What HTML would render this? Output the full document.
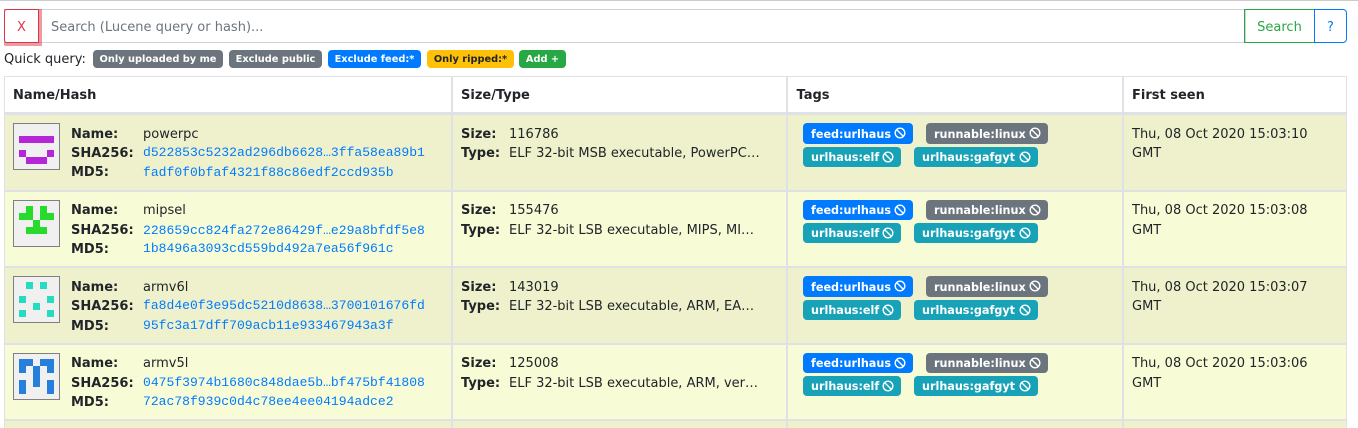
<!DOCTYPE html>
<html><head><meta charset="utf-8">
<style>
html,body{margin:0;padding:0;background:#fff;width:1358px;height:428px;overflow:hidden}
body{position:relative;font-family:"DejaVu Sans","Liberation Sans",sans-serif;font-size:13px;color:#212529}
.a{position:absolute;white-space:nowrap}
.bd{position:absolute;background:#dee2e6}
.row{position:absolute;left:5px;width:1341px;height:75px}
.t{position:absolute;white-space:nowrap;line-height:20px;margin-top:1px}
b{font-weight:700}
.m{font-family:"Liberation Mono",monospace;color:#007bff;font-size:13.05px}
.ic{position:absolute;left:13px;width:45px;height:45px;background:#f0f0f0;border:1px solid #808080}
.ic i{position:absolute;display:block}
.b{position:absolute;height:20px;line-height:20px;border-radius:4px;color:#fff;font-weight:700;font-size:11.2px;padding-left:8px;padding-top:1px;white-space:nowrap;box-sizing:border-box}
.b svg{position:absolute;top:4px;width:12px;height:12px}
.q{position:absolute;top:50px;height:18px;line-height:20px;border-radius:4px;color:#fff;font-weight:700;font-size:9.8px;text-align:center;white-space:nowrap}
</style></head><body>
<div class="a" style="left:0;top:0;width:1358px;height:1px;background:#ccc"></div>
<div class="a" style="left:4px;top:9px;width:1241px;height:32px;border:1px solid #ced4da;border-left:0"></div>
<div class="a" style="left:4px;top:9px;width:35px;height:34px;box-sizing:border-box;border:1px solid #dc3545;border-radius:3px 0 0 3px;background:#fff;box-shadow:0 0 0 3px rgba(220,53,69,.5);clip-path:inset(0 -3px -3px 0);color:#dc3545;text-align:center;line-height:35px;font-size:13px">X</div>
<div class="a" style="left:51px;top:9px;line-height:37px;color:#6c757d;font-size:13px">Search (Lucene query or hash)...</div>
<div class="a" style="left:1244px;top:9px;width:71px;height:34px;box-sizing:border-box;border:1px solid #28a745;color:#28a745;text-align:center;line-height:35px;font-size:13px">Search</div>
<div class="a" style="left:1314px;top:9px;width:33px;height:34px;box-sizing:border-box;border:1px solid #007bff;border-radius:0 4px 4px 0;color:#007bff;text-align:center;line-height:35px;font-size:13px">?</div>

<div class="a" style="left:4px;top:49px;line-height:21px;font-size:13px">Quick query:</div>
<div class="q" style="left:93px;width:130px;background:#6c757d">Only uploaded by me</div>
<div class="q" style="left:229px;width:93px;background:#6c757d">Exclude public</div>
<div class="q" style="left:328px;width:93px;background:#007bff">Exclude feed:*</div>
<div class="q" style="left:427px;width:87px;background:#ffc107;color:#212529">Only ripped:*</div>
<div class="q" style="left:519px;width:47px;background:#28a745">Add +</div>

<!-- rows -->
<div class="row" style="top:115px;background:#eef1cb"></div>
<div class="row" style="top:191.5px;background:#f8fcd6"></div>
<div class="row" style="top:268px;background:#eef1cb"></div>
<div class="row" style="top:344.5px;background:#f8fcd6"></div>
<div class="row" style="top:421px;background:#eef1cb;height:7px"></div>

<!-- grid -->
<div class="bd" style="left:4px;top:76px;width:1343px;height:1px"></div>
<div class="bd" style="left:4px;top:112px;width:1343px;height:3px"></div>
<div class="bd" style="left:4px;top:190px;width:1343px;height:2px"></div>
<div class="bd" style="left:4px;top:266px;width:1343px;height:2px"></div>
<div class="bd" style="left:4px;top:343px;width:1343px;height:2px"></div>
<div class="bd" style="left:4px;top:419px;width:1343px;height:2px"></div>
<div class="bd" style="left:4px;top:76px;width:1px;height:352px"></div>
<div class="bd" style="left:451px;top:76px;width:2px;height:352px"></div>
<div class="bd" style="left:786px;top:76px;width:2px;height:352px"></div>
<div class="bd" style="left:1122px;top:76px;width:2px;height:352px"></div>
<div class="bd" style="left:1346px;top:76px;width:1px;height:352px"></div>

<!-- header -->
<div class="t" style="left:13px;top:85px"><b>Name/Hash</b></div>
<div class="t" style="left:461px;top:85px"><b>Size/Type</b></div>
<div class="t" style="left:796.5px;top:85px"><b>Tags</b></div>
<div class="t" style="left:1132px;top:85px"><b>First seen</b></div>

<!-- row 1 -->
<div class="ic" style="top:123px"><i style="left:5px;top:12px;width:35px;height:7px;background:#b526d9"></i><i style="left:5px;top:26px;width:7px;height:7px;background:#b526d9"></i><i style="left:33px;top:26px;width:7px;height:7px;background:#b526d9"></i><i style="left:12px;top:33px;width:21px;height:7px;background:#b526d9"></i></div>
<div class="t" style="left:71px;top:124px"><b>Name:</b></div><div class="t" style="left:143px;top:124px">powerpc</div>
<div class="t" style="left:71px;top:143px"><b>SHA256:</b></div><div class="t m" style="left:143px;top:142px">d522853c5232ad296db6628…3ffa58ea89b1</div>
<div class="t" style="left:71px;top:162px"><b>MD5:</b></div><div class="t m" style="left:143px;top:162px">fadf0f0bfaf4321f88c86edf2ccd935b</div>
<div class="t" style="left:461px;top:124px"><b>Size:</b></div><div class="t" style="left:509px;top:124px">116786</div>
<div class="t" style="left:461px;top:143px"><b>Type:</b></div><div class="t" style="left:509px;top:143px">ELF 32-bit MSB executable, PowerPC…</div>
<div class="b" style="left:803px;top:123px;width:110px;height:21px;line-height:21px;background:#007bff">feed:urlhaus<svg style="left:91px" viewBox="0 0 12 12" fill="none" stroke="#fff" stroke-width="1.4"><circle cx="6" cy="6" r="4.8"/><path d="M2.6 2.6l6.8 6.8"/></svg></div>
<div class="b" style="left:926px;top:123px;width:122px;height:21px;line-height:21px;background:#6c757d">runnable:linux<svg style="left:103px" viewBox="0 0 12 12" fill="none" stroke="#fff" stroke-width="1.4"><circle cx="6" cy="6" r="4.8"/><path d="M2.6 2.6l6.8 6.8"/></svg></div>
<div class="b" style="left:803px;top:147px;width:98px;background:#17a2b8">urlhaus:elf<svg style="left:79px" viewBox="0 0 12 12" fill="none" stroke="#fff" stroke-width="1.4"><circle cx="6" cy="6" r="4.8"/><path d="M2.6 2.6l6.8 6.8"/></svg></div>
<div class="b" style="left:914px;top:147px;width:124px;background:#17a2b8">urlhaus:gafgyt<svg style="left:105px" viewBox="0 0 12 12" fill="none" stroke="#fff" stroke-width="1.4"><circle cx="6" cy="6" r="4.8"/><path d="M2.6 2.6l6.8 6.8"/></svg></div>
<div class="t" style="left:1132px;top:124px">Thu, 08 Oct 2020 15:03:10</div><div class="t" style="left:1132px;top:143px">GMT</div>

<!-- row 2 -->
<div class="ic" style="top:200px"><i style="left:12px;top:5px;width:7px;height:7px;background:#26db2b"></i><i style="left:26px;top:5px;width:7px;height:7px;background:#26db2b"></i><i style="left:5px;top:12px;width:14px;height:7px;background:#26db2b"></i><i style="left:26px;top:12px;width:14px;height:7px;background:#26db2b"></i><i style="left:19px;top:19px;width:7px;height:7px;background:#26db2b"></i><i style="left:12px;top:26px;width:21px;height:7px;background:#26db2b"></i></div>
<div class="t" style="left:71px;top:200px"><b>Name:</b></div><div class="t" style="left:143px;top:200px">mipsel</div>
<div class="t" style="left:71px;top:220px"><b>SHA256:</b></div><div class="t m" style="left:143px;top:220px">228659cc824fa272e86429f…e29a8bfdf5e8</div>
<div class="t" style="left:71px;top:239px"><b>MD5:</b></div><div class="t m" style="left:143px;top:238px">1b8496a3093cd559bd492a7ea56f961c</div>
<div class="t" style="left:461px;top:200px"><b>Size:</b></div><div class="t" style="left:509px;top:200px">155476</div>
<div class="t" style="left:461px;top:220px"><b>Type:</b></div><div class="t" style="left:509px;top:220px">ELF 32-bit LSB executable, MIPS, MI…</div>
<div class="b" style="left:803px;top:200px;width:110px;background:#007bff">feed:urlhaus<svg style="left:91px" viewBox="0 0 12 12" fill="none" stroke="#fff" stroke-width="1.4"><circle cx="6" cy="6" r="4.8"/><path d="M2.6 2.6l6.8 6.8"/></svg></div>
<div class="b" style="left:926px;top:200px;width:122px;background:#6c757d">runnable:linux<svg style="left:103px" viewBox="0 0 12 12" fill="none" stroke="#fff" stroke-width="1.4"><circle cx="6" cy="6" r="4.8"/><path d="M2.6 2.6l6.8 6.8"/></svg></div>
<div class="b" style="left:803px;top:223px;width:98px;background:#17a2b8">urlhaus:elf<svg style="left:79px" viewBox="0 0 12 12" fill="none" stroke="#fff" stroke-width="1.4"><circle cx="6" cy="6" r="4.8"/><path d="M2.6 2.6l6.8 6.8"/></svg></div>
<div class="b" style="left:914px;top:223px;width:124px;background:#17a2b8">urlhaus:gafgyt<svg style="left:105px" viewBox="0 0 12 12" fill="none" stroke="#fff" stroke-width="1.4"><circle cx="6" cy="6" r="4.8"/><path d="M2.6 2.6l6.8 6.8"/></svg></div>
<div class="t" style="left:1132px;top:200px">Thu, 08 Oct 2020 15:03:08</div><div class="t" style="left:1132px;top:220px">GMT</div>

<!-- row 3 -->
<div class="ic" style="top:276px"><i style="left:12px;top:5px;width:7px;height:7px;background:#26dbc0"></i><i style="left:26px;top:5px;width:7px;height:7px;background:#26dbc0"></i><i style="left:5px;top:19px;width:7px;height:7px;background:#26dbc0"></i><i style="left:33px;top:19px;width:7px;height:7px;background:#26dbc0"></i><i style="left:19px;top:26px;width:7px;height:7px;background:#26dbc0"></i><i style="left:5px;top:33px;width:7px;height:7px;background:#26dbc0"></i><i style="left:33px;top:33px;width:7px;height:7px;background:#26dbc0"></i></div>
<div class="t" style="left:71px;top:277px"><b>Name:</b></div><div class="t" style="left:143px;top:277px">armv6l</div>
<div class="t" style="left:71px;top:296px"><b>SHA256:</b></div><div class="t m" style="left:143px;top:295px">fa8d4e0f3e95dc5210d8638…3700101676fd</div>
<div class="t" style="left:71px;top:316px"><b>MD5:</b></div><div class="t m" style="left:143px;top:315px">95fc3a17dff709acb11e933467943a3f</div>
<div class="t" style="left:461px;top:277px"><b>Size:</b></div><div class="t" style="left:509px;top:277px">143019</div>
<div class="t" style="left:461px;top:296px"><b>Type:</b></div><div class="t" style="left:509px;top:296px">ELF 32-bit LSB executable, ARM, EA…</div>
<div class="b" style="left:803px;top:276px;width:110px;height:21px;line-height:21px;background:#007bff">feed:urlhaus<svg style="left:91px" viewBox="0 0 12 12" fill="none" stroke="#fff" stroke-width="1.4"><circle cx="6" cy="6" r="4.8"/><path d="M2.6 2.6l6.8 6.8"/></svg></div>
<div class="b" style="left:926px;top:276px;width:122px;height:21px;line-height:21px;background:#6c757d">runnable:linux<svg style="left:103px" viewBox="0 0 12 12" fill="none" stroke="#fff" stroke-width="1.4"><circle cx="6" cy="6" r="4.8"/><path d="M2.6 2.6l6.8 6.8"/></svg></div>
<div class="b" style="left:803px;top:300px;width:98px;background:#17a2b8">urlhaus:elf<svg style="left:79px" viewBox="0 0 12 12" fill="none" stroke="#fff" stroke-width="1.4"><circle cx="6" cy="6" r="4.8"/><path d="M2.6 2.6l6.8 6.8"/></svg></div>
<div class="b" style="left:914px;top:300px;width:124px;background:#17a2b8">urlhaus:gafgyt<svg style="left:105px" viewBox="0 0 12 12" fill="none" stroke="#fff" stroke-width="1.4"><circle cx="6" cy="6" r="4.8"/><path d="M2.6 2.6l6.8 6.8"/></svg></div>
<div class="t" style="left:1132px;top:277px">Thu, 08 Oct 2020 15:03:07</div><div class="t" style="left:1132px;top:296px">GMT</div>

<!-- row 4 -->
<div class="ic" style="top:353px"><i style="left:5px;top:5px;width:14px;height:7px;background:#2680db"></i><i style="left:26px;top:5px;width:14px;height:7px;background:#2680db"></i><i style="left:5px;top:12px;width:7px;height:7px;background:#2680db"></i><i style="left:33px;top:12px;width:7px;height:7px;background:#2680db"></i><i style="left:19px;top:12px;width:7px;height:21px;background:#2680db"></i><i style="left:5px;top:26px;width:7px;height:14px;background:#2680db"></i><i style="left:33px;top:26px;width:7px;height:14px;background:#2680db"></i></div>
<div class="t" style="left:71px;top:353px"><b>Name:</b></div><div class="t" style="left:143px;top:353px">armv5l</div>
<div class="t" style="left:71px;top:373px"><b>SHA256:</b></div><div class="t m" style="left:143px;top:372px">0475f3974b1680c848dae5b…bf475bf41808</div>
<div class="t" style="left:71px;top:392px"><b>MD5:</b></div><div class="t m" style="left:143px;top:391px">72ac78f939c0d4c78ee4ee04194adce2</div>
<div class="t" style="left:461px;top:353px"><b>Size:</b></div><div class="t" style="left:509px;top:353px">125008</div>
<div class="t" style="left:461px;top:373px"><b>Type:</b></div><div class="t" style="left:509px;top:373px">ELF 32-bit LSB executable, ARM, ver…</div>
<div class="b" style="left:803px;top:353px;width:110px;background:#007bff">feed:urlhaus<svg style="left:91px" viewBox="0 0 12 12" fill="none" stroke="#fff" stroke-width="1.4"><circle cx="6" cy="6" r="4.8"/><path d="M2.6 2.6l6.8 6.8"/></svg></div>
<div class="b" style="left:926px;top:353px;width:122px;background:#6c757d">runnable:linux<svg style="left:103px" viewBox="0 0 12 12" fill="none" stroke="#fff" stroke-width="1.4"><circle cx="6" cy="6" r="4.8"/><path d="M2.6 2.6l6.8 6.8"/></svg></div>
<div class="b" style="left:803px;top:376px;width:98px;background:#17a2b8">urlhaus:elf<svg style="left:79px" viewBox="0 0 12 12" fill="none" stroke="#fff" stroke-width="1.4"><circle cx="6" cy="6" r="4.8"/><path d="M2.6 2.6l6.8 6.8"/></svg></div>
<div class="b" style="left:914px;top:376px;width:124px;background:#17a2b8">urlhaus:gafgyt<svg style="left:105px" viewBox="0 0 12 12" fill="none" stroke="#fff" stroke-width="1.4"><circle cx="6" cy="6" r="4.8"/><path d="M2.6 2.6l6.8 6.8"/></svg></div>
<div class="t" style="left:1132px;top:373px">GMT</div><div class="t" style="left:1132px;top:353px">Thu, 08 Oct 2020 15:03:06</div>
</body></html>
